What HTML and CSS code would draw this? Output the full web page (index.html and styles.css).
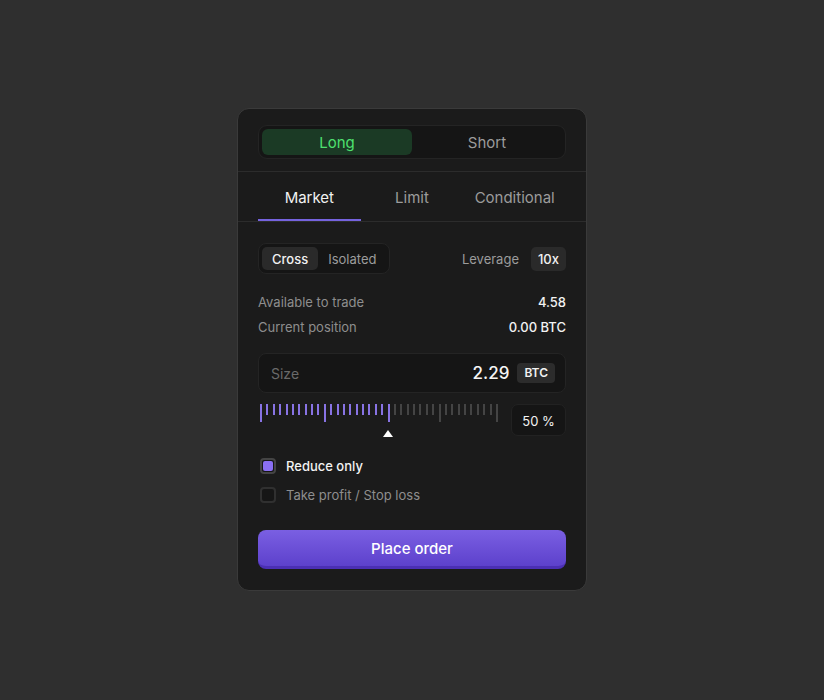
FILE: index.html
```html
<!DOCTYPE html>
<html lang="en">
<head>
    <meta charset="UTF-8">
    <meta name="viewport" content="width=device-width, initial-scale=1.0">
    <title>Order panel</title>
    <link rel="stylesheet" href="styles.css">
</head>
<body>
    <div class="panel">
        <div class="side">
            <div class="side-toggle">
                <button class="side-btn long active" type="button">Long</button>
                <button class="side-btn" type="button">Short</button>
            </div>
        </div>

        <nav class="tabs">
            <a href="" class="tab active">Market</a>
            <a href="" class="tab">Limit</a>
            <a href="" class="tab">Conditional</a>
        </nav>

        <div class="form">
            <div class="opts">
                <div class="margin-toggle">
                    <button class="margin-btn active" type="button">Cross</button>
                    <button class="margin-btn" type="button">Isolated</button>
                </div>
                <div class="leverage">
                    <span>Leverage</span>
                    <span class="badge">10x</span>
                </div>
            </div>

            <div class="stats">
                <div class="stat"><span>Available to trade</span><strong>4.58</strong></div>
                <div class="stat"><span>Current position</span><strong>0.00 BTC</strong></div>
            </div>

            <div class="size-input">
                <span class="placeholder">Size</span>
                <span class="amount">2.29</span>
                <span class="unit">BTC</span>
            </div>

            <div class="slider-row">
                <div class="slider">
                    <div class="ticks" id="ticks"></div>
                    <span class="thumb"></span>
                </div>
                <div class="percent">50 %</div>
            </div>

            <div class="checks">
                <label class="check">
                    <span class="box checked"><span></span></span>
                    Reduce only
                </label>
                <label class="check muted">
                    <span class="box"></span>
                    Take profit / Stop loss
                </label>
            </div>

            <button class="place" type="button">Place order</button>
        </div>
    </div>

    <script>
        // Build the slider ticks, long ones mark the steps
        const ticks = document.getElementById('ticks');
        const longTicks = [0, 10, 20, 28, 37];
        for (let i = 0; i < 38; i++) {
            const t = document.createElement('span');
            t.className = 'tick';
            if (longTicks.includes(i)) t.classList.add('long');
            if (i <= 20) t.classList.add('on');
            ticks.appendChild(t);
        }
    </script>
</body>
</html>
```

FILE: styles.css
```css
/* Page */
body {
    margin: 0;
    background-color: #2f2f2f;
    font-family: Inter, "Noto Sans", sans-serif;
    color: #f2f2f2;
    height: 700px;
}

button {
    font-family: inherit;
    border: none;
    background: none;
    cursor: pointer;
    padding: 0;
}

/* Card */
.panel {
    width: 350px;
    box-sizing: border-box;
    margin: 108px auto 0;
    background-color: #1b1b1b;
    border: 1px solid #3a3a3a;
    border-radius: 12px;
}

/* Long / Short */
.side {
    padding: 16px 20px 12px;
    border-bottom: 1px solid #2c2c2c;
}

.side-toggle {
    display: flex;
    height: 34px;
    box-sizing: border-box;
    padding: 3px;
    background-color: #151515;
    border: 1px solid #242424;
    border-radius: 9px;
}

.side-btn {
    flex: 1;
    border-radius: 6px;
    font-size: 15px;
    color: #9c9c9c;
}

.side-btn.long.active {
    background-color: #1b3a25;
    color: #4ee06f;
}

/* Tabs */
.tabs {
    display: flex;
    padding: 0 20px;
    border-bottom: 1px solid #2c2c2c;
}

.tab {
    flex: 1;
    height: 49px;
    line-height: 52px;
    text-align: center;
    font-size: 15px;
    color: #9c9c9c;
    text-decoration: none;
    box-sizing: border-box;
}

.tab.active {
    color: #f2f2f2;
    border-bottom: 2px solid #7563de;
}

/* Form */
.form {
    padding: 21px 20px 21px;
}

.opts {
    display: flex;
    justify-content: space-between;
    align-items: center;
}

.margin-toggle {
    display: flex;
    height: 31px;
    box-sizing: border-box;
    padding: 3px;
    background-color: #151515;
    border: 1px solid #242424;
    border-radius: 8px;
}

.margin-btn {
    padding: 0 10px;
    border-radius: 5px;
    font-size: 13px;
    color: #9c9c9c;
}

.margin-btn.active {
    background-color: #2a2a2a;
    color: #f2f2f2;
    font-weight: 500;
}

.leverage {
    display: flex;
    align-items: center;
    gap: 12px;
    font-size: 13px;
    color: #9c9c9c;
}

.badge {
    height: 24px;
    line-height: 24px;
    padding: 0 7px;
    background-color: #2a2a2a;
    border-radius: 5px;
    color: #f2f2f2;
    font-weight: 500;
}

.stats {
    margin-top: 18px;
    display: flex;
    flex-direction: column;
    gap: 5px;
}

.stat {
    display: flex;
    justify-content: space-between;
    align-items: center;
    height: 20px;
    font-size: 13px;
    color: #8e8e8e;
}

.stat strong {
    color: #f2f2f2;
    font-weight: 500;
}

/* Size input */
.size-input {
    margin-top: 16px;
    height: 40px;
    box-sizing: border-box;
    display: flex;
    align-items: center;
    padding: 0 10px 0 12px;
    background-color: #151515;
    border: 1px solid #242424;
    border-radius: 8px;
}

.placeholder {
    flex: 1;
    font-size: 14px;
    color: #6a6a6a;
}

.amount {
    font-size: 17px;
    font-weight: 500;
    color: #f5f5f5;
}

.unit {
    margin-left: 8px;
    height: 20px;
    line-height: 20px;
    padding: 0 7px;
    background-color: #2c2c2c;
    border-radius: 4px;
    font-size: 12px;
    font-weight: 600;
}

/* Slider */
.slider-row {
    margin-top: 11px;
    display: flex;
    justify-content: space-between;
}

.slider {
    position: relative;
    width: 240px;
    height: 33px;
    padding-left: 2px;
    box-sizing: border-box;
}

.ticks {
    display: flex;
    justify-content: space-between;
    width: 238px;
}

.tick {
    width: 2px;
    height: 11px;
    background-color: #444;
}

.tick.long {
    height: 18px;
}

.tick.on {
    background-color: #8873e4;
}

.thumb {
    position: absolute;
    left: 125px;
    top: 26px;
    width: 0;
    height: 0;
    border-left: 5px solid transparent;
    border-right: 5px solid transparent;
    border-bottom: 7px solid #fff;
}

.percent {
    width: 55px;
    height: 32px;
    line-height: 32px;
    box-sizing: border-box;
    text-align: center;
    background-color: #151515;
    border: 1px solid #222;
    border-radius: 7px;
    font-size: 13px;
}

/* Checkboxes */
.checks {
    margin-top: 19px;
    display: flex;
    flex-direction: column;
    gap: 9px;
}

.check {
    display: flex;
    align-items: center;
    gap: 10px;
    height: 20px;
    font-size: 13px;
    font-weight: 500;
    padding-left: 2px;
}

.check.muted {
    color: #8e8e8e;
    font-weight: 400;
}

.box {
    width: 16px;
    height: 16px;
    box-sizing: border-box;
    border: 2px solid #303030;
    border-radius: 4px;
    background-color: #161616;
    padding: 1px;
}

.box.checked {
    border-color: #444;
}

.box.checked span {
    display: block;
    width: 100%;
    height: 100%;
    border-radius: 2px;
    background-color: #8a6ff2;
}

/* Place order */
.place {
    display: block;
    width: 100%;
    margin-top: 25px;
    height: 39px;
    border-radius: 8px;
    background: linear-gradient(#7a5fe2, #5d41cc);
    border-bottom: 3px solid #4b2fb4;
    color: #fff;
    font-size: 15px;
    font-weight: 500;
}
```
